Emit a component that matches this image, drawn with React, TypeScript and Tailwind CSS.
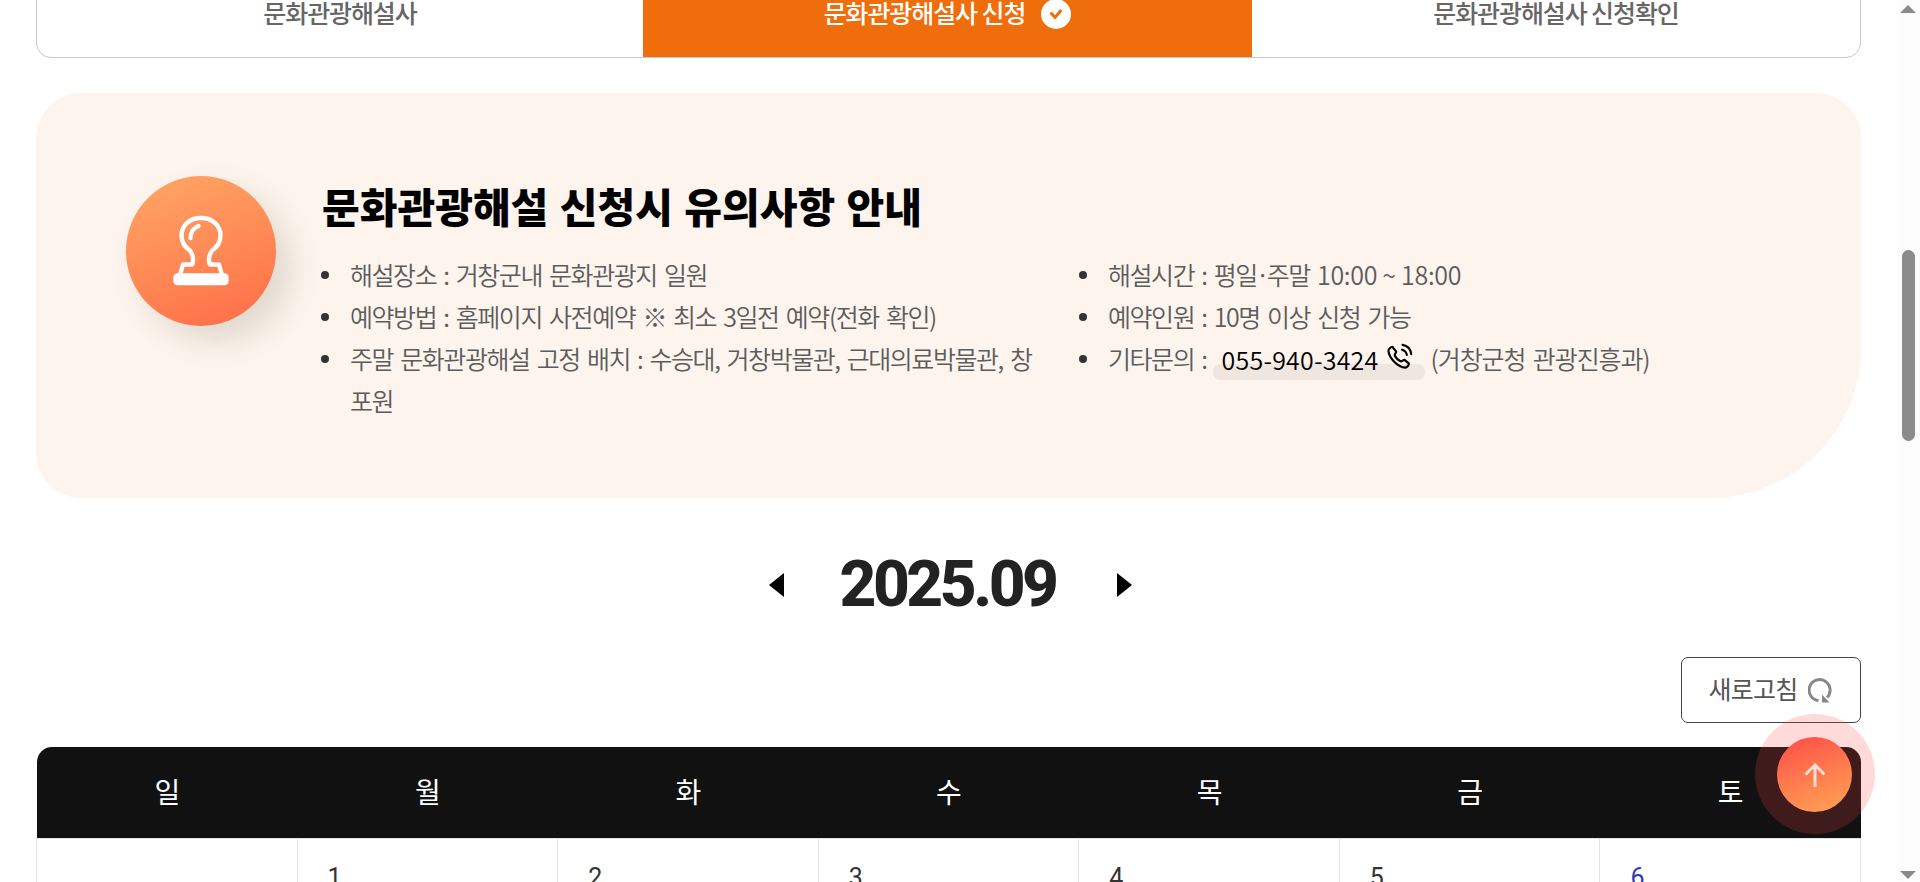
const TABS = [
  { label: '문화관광해설사', active: false },
  { label: '문화관광해설사 신청', active: true },
  { label: '문화관광해설사 신청확인', active: false },
];

const NOTICE_LEFT = [
  { lines: ['해설장소 : 거창군내 문화관광지 일원'] },
  { lines: ['예약방법 : 홈페이지 사전예약 ※ 최소 3일전 예약(전화 확인)'] },
  { lines: ['주말 문화관광해설 고정 배치 : 수승대, 거창박물관, 근대의료박물관, 창', '포원'] },
];

const WEEKDAYS = ['일', '월', '화', '수', '목', '금', '토'];
const DAYS = ['', '1', '2', '3', '4', '5', '6'];

function StampIcon() {
  return (
    <svg width="58" height="72" viewBox="0 0 58 72" fill="none" stroke="#fff" strokeWidth="4.4" strokeLinecap="round" strokeLinejoin="round">
      <path d="M8 60l3-10.500h9c2-4 1-10-2-14A18.500 18.500 0 0 1 9.500 21C9.500 10 18 3 29 3s19.500 7 19.500 18A18.500 18.500 0 0 1 40 35.500c-3 4-4 10-2 14h9L50 60" />
      <path d="M18.500 23c0-6 3-10 8-12" />
      <rect x="3.500" y="60.500" width="51" height="7.500" rx="2" fill="#fff" />
    </svg>
  );
}

function PhoneIcon() {
  return (
    <svg className="relative -top-0.5 -left-0.5" width="28" height="28" viewBox="0 0 28 28" fill="none" stroke="#000" strokeWidth="2.2" strokeLinecap="round" strokeLinejoin="round">
      <path d="M2.500 8.500C2.500 7 5 4.500 6.500 4.500L10.500 9.500C10.500 11 8.500 12 9 13.500C10.500 16.500 12.500 18.500 15 19.500C16.500 20 17.500 18 19 18L23.500 21.500C24 23 21.500 26 20 26C12 25.500 3 16 2.500 8.500z" />
      <path d="M16.500 7.500c3 .8 4.500 2.500 5 5.500M17 2.500c5 .8 8.500 4.500 9 9.500" />
    </svg>
  );
}

function Item({ children }: { children: React.ReactNode }) {
  return (
    <li className="flex">
      <span className="mt-[18px] mr-[21px] size-2 shrink-0 rounded-full bg-[#333]" />
      <div className="whitespace-nowrap">{children}</div>
    </li>
  );
}

export default function App() {
  return (
    <div className="flex h-[882px] w-[1920px] overflow-hidden bg-white font-['Noto_Sans_CJK_KR',sans-serif]">
      <main className="relative w-[1898px] shrink-0 pl-9">
        <nav className="-mt-8 grid h-[90px] w-[1825px] grid-cols-[606px_609px_1fr] overflow-hidden rounded-[15px] border border-[#c8c8c8]">
          {TABS.map((tab) => (
            <div
              key={tab.label}
              className={`flex items-center justify-center text-[25px] font-medium tracking-[-1.1px] whitespace-nowrap ${tab.active ? 'bg-[#ef6d0a] text-white' : 'text-[#666]'}`}
            >
              {tab.label}
              {tab.active && (
                <svg className="mt-px ml-4" width="30" height="30" viewBox="0 0 30 30" fill="none">
                  <circle cx="15" cy="15" r="15" fill="#fff" />
                  <path d="M10.500 14.500l3.500 4 5.500-6.500" stroke="#ef6d0a" strokeWidth="3" strokeLinecap="round" strokeLinejoin="round" />
                </svg>
              )}
            </div>
          ))}
        </nav>

        <section className="mt-[35px] flex h-[405px] w-[1825px] rounded-[45px] rounded-br-[150px] bg-[#fdf4ed] pt-[83px] pl-[90px]">
          <div className="flex size-[150px] shrink-0 items-center justify-center rounded-full bg-linear-160 from-[#ffa766] to-[#ff6b47] shadow-[15px_15px_30px_rgba(67,67,33,0.15)]">
            <StampIcon />
          </div>
          <div className="ml-[45px]">
            <h2 className="mt-[3px] h-[52px] pl-px text-[41px] leading-[52px] font-black tracking-[0px] whitespace-nowrap text-black [word-spacing:2px]">
              문화관광해설 신청시 유의사항 안내
            </h2>
            <div className="mt-[22px] flex text-[25px] leading-[42px] font-[350] tracking-[-1.45px] text-[#5c5c5c] [word-spacing:3px]">
              <ul className="w-[758px]">
                {NOTICE_LEFT.map((item) => (
                  <Item key={item.lines[0]}>
                    {item.lines.map((line) => (
                      <p key={line}>{line}</p>
                    ))}
                  </Item>
                ))}
              </ul>
              <ul>
                <Item>
                  해설시간 : 평일<span className="-ml-px tracking-[-3px]">·</span>주말{' '}
                  <span className="tracking-[-0.3px] [word-spacing:0px]">10:00 ~ 18:00</span>
                </Item>
                <Item>예약인원 : 10명 이상 신청 가능</Item>
                <Item>
                  <div className="flex">
                    기타문의 :
                    <a className="relative mr-1.5 ml-1.5 flex h-[42px] w-[212px] items-center gap-2.5 px-[9px] tracking-[0.2px] text-black">
                      <span className="absolute -bottom-px left-0 h-4 w-full rounded-[7px] bg-[#efe6df]" />
                      <span className="relative top-px">055-940-3424</span>
                      <PhoneIcon />
                    </a>
                    <span className="tracking-[-1.1px]">(거창군청 관광진흥과)</span>
                  </div>
                </Item>
              </ul>
            </div>
          </div>
        </section>

        <div className="mt-[51px] flex h-[72px] w-[1825px] items-center justify-center pl-1">
          <svg width="15" height="24" viewBox="0 0 15 24"><path d="M15 0v24L0 12z" /></svg>
          <strong className="w-[333px] pr-1.5 text-center font-[Roboto,sans-serif] text-[64px] font-extrabold tracking-[-3.500px] text-[#222]">2025.09</strong>
          <svg width="15" height="24" viewBox="0 0 15 24"><path d="M0 0v24l15-12z" /></svg>
        </div>

        <div className="mt-9 flex w-[1825px] justify-end">
          <button className="flex h-[66px] w-[180px] items-center justify-center gap-[11px] rounded-[7px] border border-[#444] text-[25px] tracking-[-0.800px] text-[#555]">
            <span className="-mt-0.5">새로고침</span>
            <svg width="25" height="26" viewBox="0 0 25 26" fill="none" stroke="#888" strokeWidth="3">
              <path d="M10.500 23.500A10.500 10.500 0 1 1 19 20.500" />
              <path d="M14 17.500v8h7.500z" fill="#888" stroke="none" />
            </svg>
          </button>
        </div>

        <div className="mt-6 ml-px grid h-[91px] w-[1824px] grid-cols-7 items-center rounded-t-[15px] bg-[#111] text-center text-[28px] text-white">
          {WEEKDAYS.map((day) => (
            <span key={day} className="-mt-1">{day}</span>
          ))}
        </div>
        <div className="grid h-[120px] w-[1825px] grid-cols-7 border-t border-l border-[#e5e5e5]">
          {DAYS.map((day, i) => (
            <div key={i} className={`border-r border-[#e5e5e5] pt-5 pl-[30px] font-[Roboto,sans-serif] text-[25px] ${day === '6' ? 'text-[#2a3cb0]' : 'text-[#333]'}`}>
              {day}
            </div>
          ))}
        </div>

        <button className="absolute top-[714px] left-[1755px] flex size-[120px] items-center justify-center rounded-full bg-[#ff4747]/20">
          <span className="mr-px flex size-[75px] items-center justify-center rounded-full bg-linear-160 from-[#ff4747] to-[#ffa355]">
            <svg className="mt-0.5" width="22" height="24" viewBox="0 0 22 24" fill="none" stroke="#ffdcd5" strokeWidth="3">
              <path d="M11 24V3M1.500 11.500L11 2l9.500 9.500" />
            </svg>
          </span>
        </button>
      </main>

      <aside className="flex w-[22px] flex-col items-center justify-between bg-[#fcfcfc]">
        <svg className="mt-[5px] mr-0.5" width="16" height="8" viewBox="0 0 16 8" fill="#8a8a8a"><path d="M8 0l8 8H0z" /></svg>
        <div className="-mt-[193px] mr-px h-[191px] w-[13px] rounded-full bg-[#8a8a8a]" />
        <svg className="mr-0.5 mb-[3px]" width="16" height="8" viewBox="0 0 16 8" fill="#8a8a8a"><path d="M8 8L0 0h16z" /></svg>
      </aside>
    </div>
  );
}
